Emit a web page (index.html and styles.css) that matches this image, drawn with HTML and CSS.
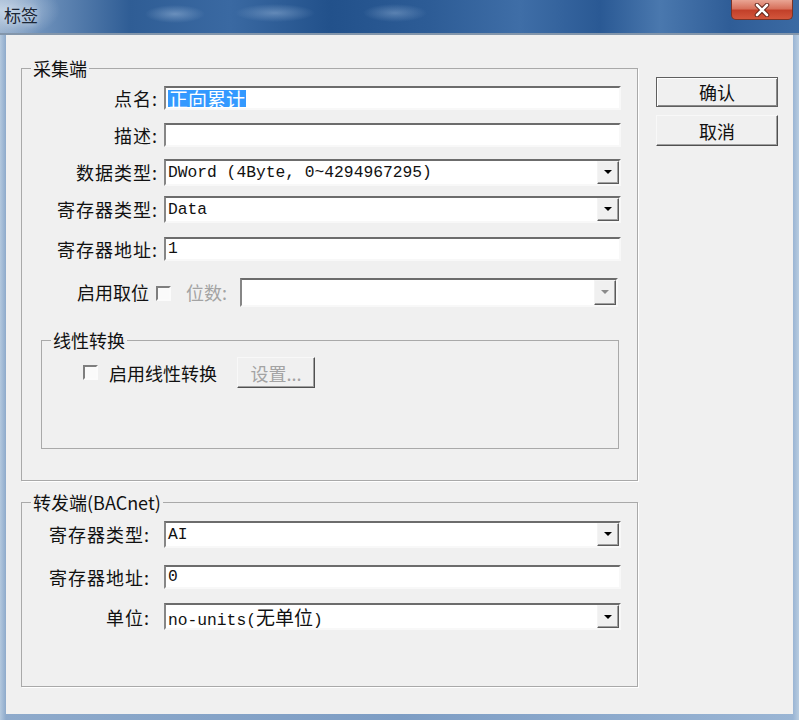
FILE: index.html
```html
<!DOCTYPE html>
<html lang="zh-CN">
<head>
    <meta charset="UTF-8">
    <title>标签</title>
    <link rel="stylesheet" href="styles.css">
</head>
<body>
    <div class="window">
        <div class="titlebar">
            <span class="title">标签</span>
            <div class="close">
                <svg width="16" height="14" viewBox="0 0 16 14">
                    <path d="M3 2 L13 12 M13 2 L3 12" stroke="#5a1e14" stroke-width="4.5" stroke-linecap="round"/>
                    <path d="M3 2 L13 12 M13 2 L3 12" stroke="#fff" stroke-width="2.6" stroke-linecap="round"/>
                </svg>
            </div>
        </div>

        <div class="client">
            <div class="groups">
                <fieldset class="group group-collect">
                    <legend>采集端</legend>

                    <div class="row">
                        <label class="label">点名:</label>
                        <div class="edit"><span class="sel">正向累计</span></div>
                    </div>
                    <div class="row">
                        <label class="label">描述:</label>
                        <div class="edit"></div>
                    </div>
                    <div class="row">
                        <label class="label">数据类型:</label>
                        <div class="combo">
                            <div class="combo-value">DWord (4Byte, 0~4294967295)</div>
                            <div class="combo-btn"><span class="arrow"></span></div>
                        </div>
                    </div>
                    <div class="row">
                        <label class="label">寄存器类型:</label>
                        <div class="combo">
                            <div class="combo-value">Data</div>
                            <div class="combo-btn"><span class="arrow"></span></div>
                        </div>
                    </div>
                    <div class="row row-addr">
                        <label class="label">寄存器地址:</label>
                        <div class="edit">1</div>
                    </div>
                    <div class="row row-bit">
                        <span class="bit-label">启用取位</span>
                        <span class="check check-bit"></span>
                        <span class="bit-count">位数:</span>
                        <div class="combo combo-disabled">
                            <div class="combo-value"></div>
                            <div class="combo-btn"><span class="arrow"></span></div>
                        </div>
                    </div>

                    <fieldset class="group group-linear">
                        <legend>线性转换</legend>
                        <div class="linear-row">
                            <span class="check"></span>
                            <span class="linear-label">启用线性转换</span>
                            <button class="btn btn-small" disabled>设置...</button>
                        </div>
                    </fieldset>
                </fieldset>

                <fieldset class="group group-forward">
                    <legend>转发端(BACnet)</legend>

                    <div class="row">
                        <label class="label">寄存器类型:</label>
                        <div class="combo">
                            <div class="combo-value">AI</div>
                            <div class="combo-btn"><span class="arrow"></span></div>
                        </div>
                    </div>
                    <div class="row row-fwd-addr">
                        <label class="label">寄存器地址:</label>
                        <div class="edit">0</div>
                    </div>
                    <div class="row">
                        <label class="label">单位:</label>
                        <div class="combo">
                            <div class="combo-value">no-units(<span class="wide">无单位</span>)</div>
                            <div class="combo-btn"><span class="arrow"></span></div>
                        </div>
                    </div>
                </fieldset>
            </div>

            <div class="buttons">
                <button class="btn btn-default">确认</button>
                <button class="btn">取消</button>
            </div>
        </div>
    </div>
</body>
</html>
```

FILE: styles.css
```css
body {
    margin: 0;
    background: #7f9fc6;
    font-family: "Noto Sans CJK SC", sans-serif;
}

.window {
    width: 799px;
    height: 720px;
    display: flex;
    flex-direction: column;
    background: linear-gradient(90deg, #b3c8de 0, #8eaacb 6px, #7d9dc4 50%, #9ab5d4 793px, #b8cce0 799px);
}

/* title bar */
.titlebar {
    height: 33px;
    display: flex;
    justify-content: space-between;
    align-items: flex-start;
    border-bottom: 2px solid #8396ab;
    background:
        radial-gradient(ellipse 30px 9px at 175px 14px, rgba(150, 180, 215, 0.55), transparent),
        radial-gradient(ellipse 40px 9px at 275px 13px, rgba(150, 180, 215, 0.5), transparent),
        radial-gradient(ellipse 32px 9px at 395px 13px, rgba(150, 180, 215, 0.45), transparent),
        radial-gradient(ellipse 60px 30px at 0 10px, rgba(200, 215, 232, 0.9), transparent),
        linear-gradient(90deg, #8fa9c7 0, #6e91bb 40px, #2f5d95 130px, #3a69a2 230px, #22518b 330px, #2d5c96 430px, #3f6ea7 520px, #2a5994 600px, #4a78ae 660px, #2f5d97 730px, #3b6aa3 799px);
}

.title {
    padding: 5px 0 0 4px;
    font-size: 17px;
    line-height: 20px;
    color: #1b2635;
    text-shadow: 0 0 6px rgba(220, 232, 245, 0.9);
}

.close {
    width: 62px;
    height: 20px;
    margin-right: 6px;
    display: flex;
    align-items: center;
    justify-content: center;
    box-sizing: border-box;
    border: 1px solid #7a3327;
    border-top: none;
    border-radius: 0 0 5px 5px;
    background: linear-gradient(#e9a594 0, #d7715c 45%, #c2402a 55%, #d2563c 100%);
}

/* dialog body */
.client {
    flex: 1;
    margin: 0 6px 6px;
    padding: 23px 15px 0;
    display: flex;
    align-items: flex-start;
    background: #f0f0f0;
}

.groups {
    width: 617px;
}

.group {
    margin: 0;
    padding: 0;
    border: 1px solid #a9a9a9;
    box-sizing: border-box;
    box-shadow: 1px 1px 0 #fff;
}

.group legend {
    margin-left: 9px;
    padding: 0 2px;
    font-size: 18px;
    line-height: 20px;
    color: #111;
}

.group-collect {
    width: 617px;
    padding: 6px 16px 31px 0;
}

.group-forward {
    width: 617px;
    margin-top: 11px;
    padding: 8px 16px 41px 0;
}

/* label + field rows */
.row {
    height: 28px;
    display: flex;
    align-items: center;
    margin-bottom: 9px;
}

.group-forward .row {
    margin-bottom: 14.5px;
}

.group-forward .row-fwd-addr {
    margin-bottom: 12px;
}

.row-addr {
    margin-top: 12px;
}

.label {
    width: 136px;
    margin-right: 6px;
    text-align: right;
    font-size: 18px;
    line-height: 22px;
    letter-spacing: 1px;
    color: #111;
}

.group-forward .label {
    width: 128px;
    margin-right: 14px;
}

.edit,
.combo {
    flex: 1;
    box-sizing: border-box;
    border: 2px solid;
    border-color: #6c6c6c #f8f8f8 #f8f8f8 #868686;
    background: #fff;
    font-family: "Liberation Mono", "Noto Sans CJK SC", monospace;
    font-size: 16.3px;
    color: #111;
}

.edit {
    height: 24px;
    padding-left: 2px;
    line-height: 20px;
}

.combo {
    height: 27px;
    display: flex;
}

.combo-value {
    flex: 1;
    padding-left: 2px;
    line-height: 23px;
    white-space: nowrap;
}

.combo-btn {
    width: 22px;
    display: flex;
    align-items: center;
    justify-content: center;
    box-sizing: border-box;
    border: 1px solid;
    border-color: #f4f4f4 #5a5a5a #5a5a5a #f4f4f4;
    background: #f0f0f0;
    box-shadow: inset -1px -1px 0 #a0a0a0;
}

.arrow {
    width: 0;
    height: 0;
    border-left: 4px solid transparent;
    border-right: 4px solid transparent;
    border-top: 4px solid #000;
}

.combo-disabled .arrow {
    border-top-color: #8a8a8a;
}

.sel {
    display: inline-block;
    height: 17px;
    margin-top: 2px;
    padding: 0 1px;
    background: #3399ff;
    color: #fff;
    font-family: "Noto Sans CJK SC", sans-serif;
    font-size: 19px;
    line-height: 17px;
    vertical-align: top;
}

.wide {
    font-family: "Noto Sans CJK SC", sans-serif;
    font-size: 19px;
}

/* bit selection row */
.row-bit {
    height: 30px;
    margin-top: 14px;
    padding-left: 55px;
    font-size: 18px;
    color: #111;
}

.bit-label {
    line-height: 22px;
}

.check {
    width: 15px;
    height: 15px;
    box-sizing: border-box;
    border: 2px solid;
    border-color: #7e7e7e #fbfbfb #fbfbfb #7e7e7e;
    background: #fafafa;
}

.check-bit {
    margin-left: 7px;
    margin-top: 2px;
}

.bit-count {
    margin-left: 15px;
    color: #a3a3a3;
    line-height: 22px;
}

.row-bit .combo {
    height: 29px;
    margin-left: 13px;
    margin-right: 3px;
}

/* linear conversion box */
.group-linear {
    margin: 23px 2px 0 19px;
    padding: 7px 0 60px;
    box-shadow: none;
}

.linear-row {
    padding-left: 41px;
    display: flex;
    align-items: center;
}

.linear-label {
    margin-left: 11px;
    font-size: 18px;
    line-height: 22px;
    color: #111;
}

/* push buttons */
.buttons {
    width: 122px;
    margin-left: 18px;
    padding-top: 19px;
    display: flex;
    flex-direction: column;
    gap: 8px;
}

.btn {
    height: 31px;
    padding: 0;
    box-sizing: border-box;
    border: 1px solid;
    border-color: #f8f8f8 #505050 #505050 #f8f8f8;
    background: #f0f0f0;
    box-shadow: inset -1px -1px 0 #a0a0a0;
    font-family: "Noto Sans CJK SC", sans-serif;
    font-size: 18px;
    line-height: 26px;
    color: #111;
}

.btn-default {
    height: 30px;
    border-color: #5f5f5f;
    box-shadow: inset 1px 1px 0 #fff, inset -1px -1px 0 #8a8a8a;
}

.btn-small {
    width: 78px;
    margin-left: 20px;
    color: #a3a3a3;
}
```
